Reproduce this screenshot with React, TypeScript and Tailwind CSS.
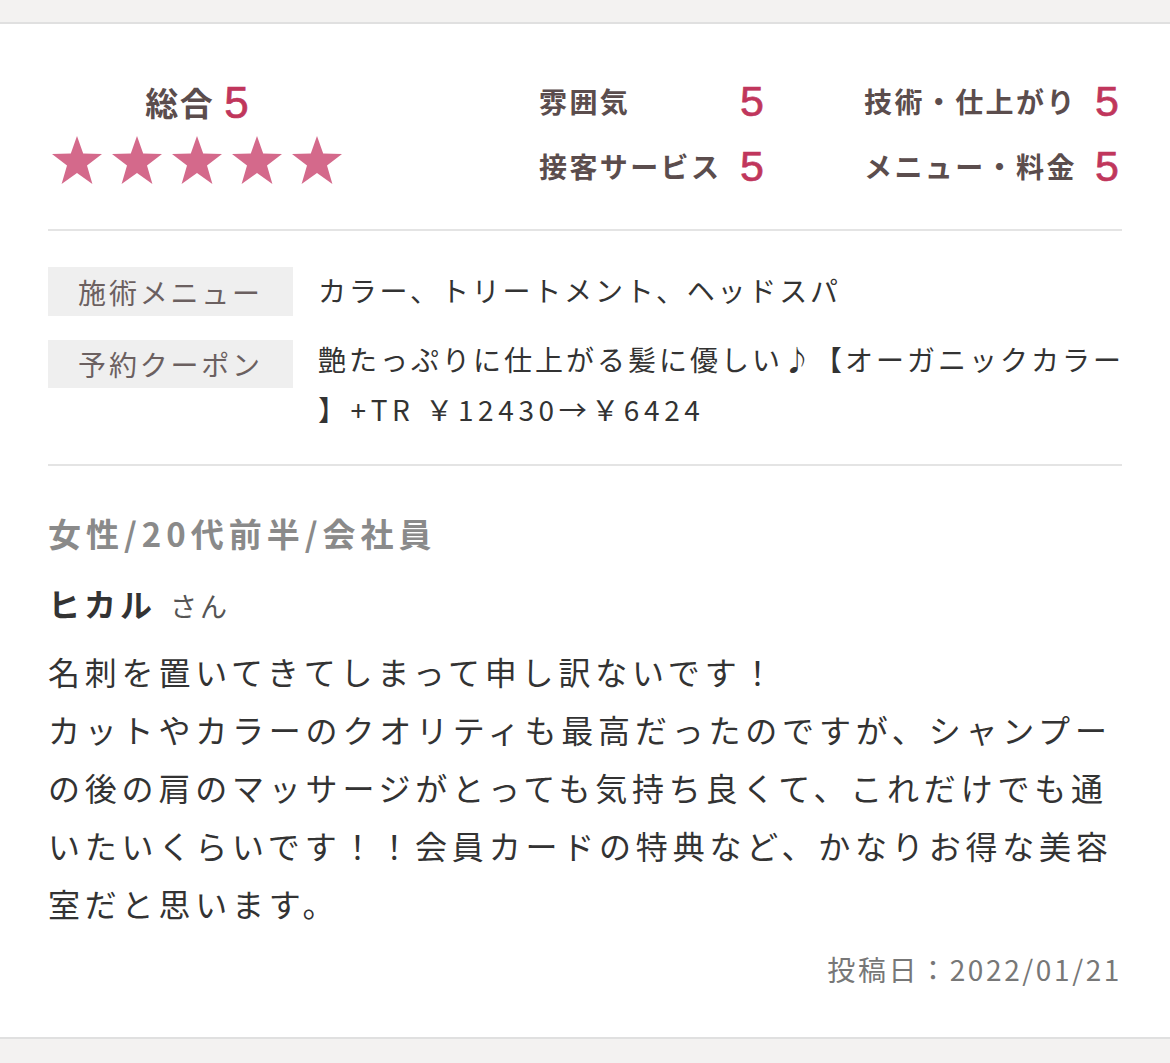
import React from "react";

const jp = "font-['Noto_Sans_CJK_JP',sans-serif]";

const Star = () => (
  <svg width="52" height="50" viewBox="0 0 52 50">
    <polygon
      points="26,1 32.2,18.4 51,18.9 36,30.5 41.4,49 26,38 10.6,49 16,30.5 1,18.9 19.8,18.4"
      fill="#d4698b"
    />
  </svg>
);

const Rating = ({ label, w }: { label: string; w: string }) => (
  <div className={`flex items-center justify-between h-[42px] ${w}`}>
    <span className="text-[28px] font-bold tracking-[2.4px] text-[#5b4d4d]">{label}</span>
    <span className="font-['Liberation_Sans',sans-serif] text-[43px] leading-none text-[#c0365c] [-webkit-text-stroke:0.7px_#c0365c]">
      5
    </span>
  </div>
);

export default function App() {
  return (
    <div className={`w-[1170px] h-[1063px] bg-[#f3f2f1] pt-[22px] ${jp}`}>
      <div className="bg-white border-t-2 border-b-2 border-[#e0e0e0] px-[48px]">
        {/* scores */}
        <div className="h-[205px] pt-[56px] flex">
          <div className="w-[298px] flex flex-col items-center">
            <div className="h-[46px] flex items-center gap-[10px]">
              <span className="text-[33px] font-bold tracking-[1.5px] text-[#5b4d4d]">総合</span>
              <span className="font-['Liberation_Sans',sans-serif] text-[44px] leading-none text-[#c0365c] [-webkit-text-stroke:0.7px_#c0365c]">
                5
              </span>
            </div>
            <div className="mt-[9px] flex gap-[8px]">
              <Star />
              <Star />
              <Star />
              <Star />
              <Star />
            </div>
          </div>
          <div className="ml-auto mr-[3px] flex gap-[100px]">
            <div className="flex flex-col gap-[23px]">
              <Rating label="雰囲気" w="w-[225px]" />
              <Rating label="接客サービス" w="w-[225px]" />
            </div>
            <div className="flex flex-col gap-[23px]">
              <Rating label="技術・仕上がり" w="w-[255px]" />
              <Rating label="メニュー・料金" w="w-[255px]" />
            </div>
          </div>
        </div>
        <div className="h-[2px] bg-[#e4e4e4]" />

        {/* menu / coupon */}
        <div className="pt-[36px] pb-[30px] flex flex-col gap-[24px] text-[28px] tracking-[2.8px]">
          <div className="flex">
            <div className="w-[245px] h-[49px] shrink-0 bg-[#efefef] flex items-center justify-center text-[#6b6060]">
              施術メニュー
            </div>
            <div className="ml-[25px] leading-[46px] text-[#333]">カラー、トリートメント、ヘッドスパ</div>
          </div>
          <div className="flex">
            <div className="w-[245px] h-[48px] shrink-0 bg-[#efefef] flex items-center justify-center text-[#6b6060]">
              予約クーポン
            </div>
            <div className="ml-[25px] flex-1 -mt-[6px] leading-[50px] text-[#333]">
              <div className="text-justify [text-align-last:justify] tracking-[1px]">
                艶たっぷりに仕上がる髪に優しい♪【オーガニックカラー
              </div>
              <div className="tracking-[4.6px]">】+TR ￥12430→￥6424</div>
            </div>
          </div>
        </div>
        <div className="h-[2px] bg-[#e4e4e4]" />

        {/* review */}
        <div className="pt-[48px] pb-[48px]">
          <div className="h-[40px] flex items-center text-[33px] font-bold tracking-[5px] text-[#8a8a8a]">
            女性/20代前半/会社員
          </div>
          <div className="mt-[25px] h-[40px] flex items-baseline gap-[14px]">
            <span className="text-[32px] font-bold tracking-[4px] text-[#333]">ヒカル</span>
            <span className="text-[27px] tracking-[3px] text-[#555]">さん</span>
          </div>
          <div className="mt-[23px] text-[32px] leading-[58px] tracking-[4.8px] text-[#333]">
            <div>名刺を置いてきてしまって申し訳ないです！</div>
            <div>カットやカラーのクオリティも最高だったのですが、シャンプー</div>
            <div>の後の肩のマッサージがとっても気持ち良くて、これだけでも通</div>
            <div>いたいくらいです！！会員カードの特典など、かなりお得な美容</div>
            <div>室だと思います。</div>
          </div>
          <div className="mt-[17px] h-[40px] flex items-center justify-end text-[28px] tracking-[2.6px] text-[#777]">
            投稿日：2022/01/21
          </div>
        </div>
      </div>
    </div>
  );
}
